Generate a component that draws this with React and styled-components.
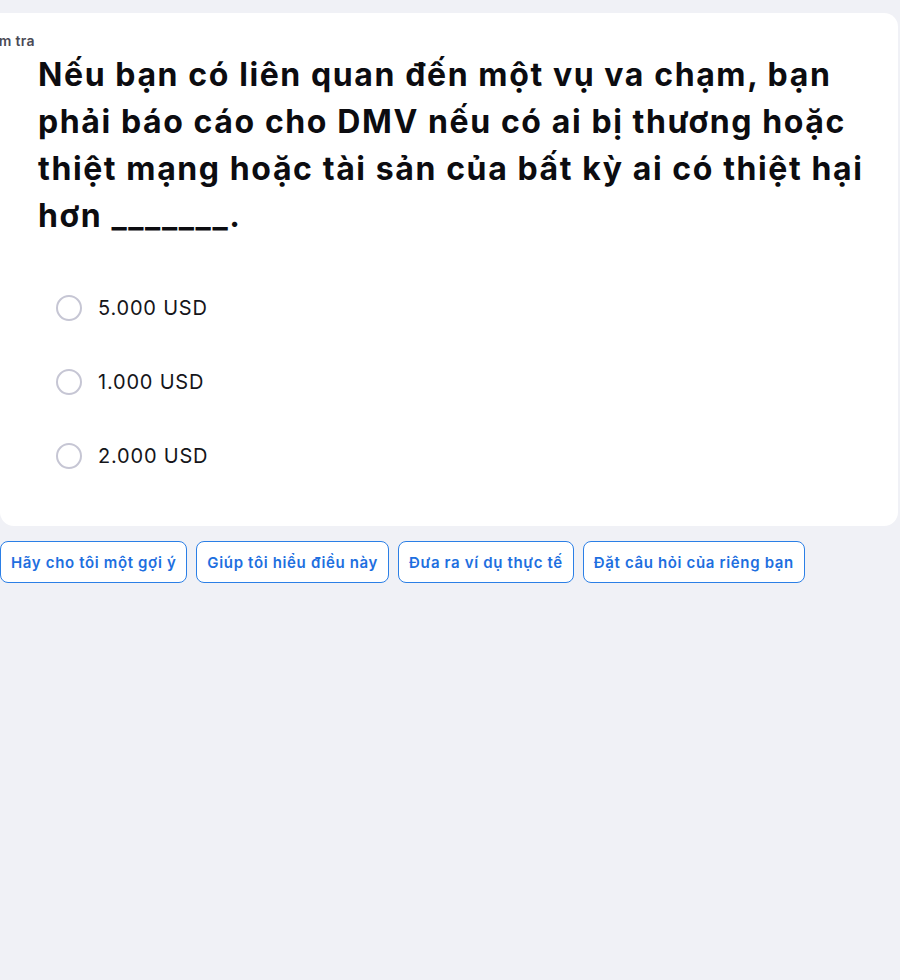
import React from 'react';
import styled, { createGlobalStyle } from 'styled-components';

const GlobalStyle = createGlobalStyle`
  html, body {
    margin: 0;
    padding: 0;
    background: #f0f1f6;
    font-family: Inter, "Noto Sans", "Liberation Sans", sans-serif;
    overflow: hidden;
  }
`;

const Page = styled.div`
  width: 900px;
  height: 980px;
  padding-top: 13px;
  box-sizing: border-box;
`;

const Card = styled.div`
  width: 898px;
  background: #ffffff;
  border-radius: 0 14px 14px 14px;
  padding: 20px 0 57px 38px;
  box-sizing: border-box;
  overflow: hidden;
`;

const Label = styled.div`
  margin-left: -62px;
  font-size: 14px;
  font-weight: 600;
  color: #4a4a55;
  line-height: 16px;
  letter-spacing: 0.3px;
`;

const Question = styled.h1`
  margin: 2px 0 0;
  max-width: 850px;
  font-size: 32px;
  font-weight: 700;
  line-height: 47px;
  letter-spacing: 1.6px;
  color: #0c0c10;
`;

const Options = styled.div`
  display: flex;
  flex-direction: column;
  gap: 48px;
  margin-top: 56px;
  padding-left: 18px;
`;

const Option = styled.label`
  display: flex;
  align-items: center;
  gap: 16px;
  height: 26px;
  font-size: 20px;
  letter-spacing: 0.8px;
  color: #15151a;
  cursor: pointer;
`;

const Radio = styled.span`
  width: 22px;
  height: 22px;
  border: 2px solid #c6c6d4;
  border-radius: 50%;
  flex-shrink: 0;
`;

const Suggestions = styled.div`
  display: flex;
  gap: 9px;
  margin-top: 15px;
`;

const Chip = styled.button`
  height: 42px;
  padding: 0 10px;
  border: 1px solid #2b7fe6;
  border-radius: 8px;
  background: #ffffff;
  color: #1e6fe0;
  font-family: inherit;
  font-size: 15px;
  font-weight: 600;
  letter-spacing: 0.65px;
  cursor: pointer;
`;

const answers = ['5.000 USD', '1.000 USD', '2.000 USD'];
const prompts = [
  'Hãy cho tôi một gợi ý',
  'Giúp tôi hiểu điều này',
  'Đưa ra ví dụ thực tế',
  'Đặt câu hỏi của riêng bạn',
];

export default function App() {
  return (
    <Page>
      <GlobalStyle />
      <Card>
        <Label>Kiểm tra</Label>
        <Question>
          Nếu bạn có liên quan đến một vụ va chạm, bạn phải báo cáo cho DMV nếu có ai bị thương hoặc
          thiệt mạng hoặc tài sản của bất kỳ ai có thiệt hại hơn _______.
        </Question>
        <Options>
          {answers.map(a => (
            <Option key={a}>
              <Radio />
              {a}
            </Option>
          ))}
        </Options>
      </Card>
      <Suggestions>
        {prompts.map(p => (
          <Chip key={p}>{p}</Chip>
        ))}
      </Suggestions>
    </Page>
  );
}
